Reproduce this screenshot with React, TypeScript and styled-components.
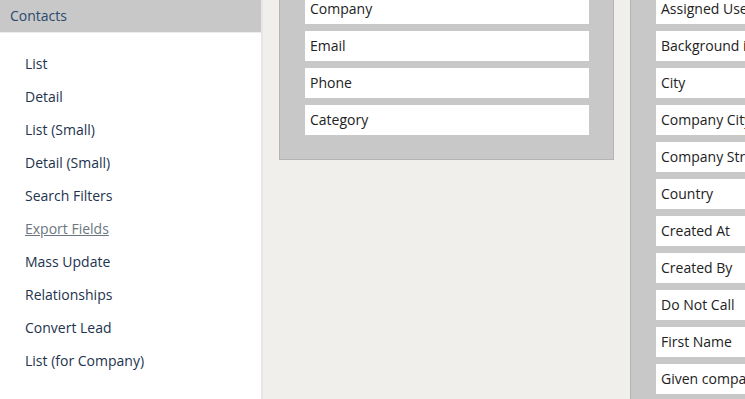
import React from 'react'
import styled, { createGlobalStyle } from 'styled-components'

const GlobalStyle = createGlobalStyle`
  html, body {
    margin: 0;
    padding: 0;
    overflow: hidden;
    background: #f0efeb;
    font-family: 'Open Sans', 'Noto Sans', sans-serif;
  }
`

const Page = styled.div`
  display: flex;
  width: 745px;
  height: 399px;
  overflow: hidden;
  background: #f0efeb;
`

const Sidebar = styled.aside`
  flex: 0 0 261px;
  background: #fff;
  border-right: 2px solid #e6e6e4;
`

const SidebarHeader = styled.div`
  height: 32px;
  line-height: 31px;
  padding-left: 10px;
  background: #c8c8c8;
  border-bottom: 1px solid #ececec;
  color: #2b4a6e;
  font-size: 14px;
`

const Menu = styled.ul`
  list-style: none;
  margin: 0;
  padding: 13px 0 0 25px;
`

const MenuItem = styled.li<{ $active?: boolean }>`
  height: 33px;
  line-height: 36px;
  font-size: 14px;
  color: ${p => (p.$active ? '#6c7680' : '#22334e')};
  text-decoration: ${p => (p.$active ? 'underline' : 'none')};
`

// the field lists are scrolled a little, so their tops sit above the window
const Main = styled.main`
  flex: 1;
  display: flex;
  align-items: flex-start;
  gap: 16px;
  padding-left: 16px;
  margin-top: -32px;
`

const Panel = styled.section<{ $width: number }>`
  flex: 0 0 ${p => p.$width}px;
  box-sizing: border-box;
  background: #c8c8c8;
  border: 1px solid #b4b4b4;
  padding: 25px 24px 24px 25px;
  display: flex;
  flex-direction: column;
  gap: 7px;
`

const Field = styled.div`
  height: 30px;
  line-height: 30px;
  padding-left: 5px;
  background: #fff;
  color: #222;
  font-size: 14px;
  white-space: nowrap;
  overflow: hidden;
`

const menu = [
  'List',
  'Detail',
  'List (Small)',
  'Detail (Small)',
  'Search Filters',
  'Export Fields',
  'Mass Update',
  'Relationships',
  'Convert Lead',
  'List (for Company)',
]

const selected = ['Company', 'Email', 'Phone', 'Category']

const available = [
  'Assigned User',
  'Background info',
  'City',
  'Company City',
  'Company Street',
  'Country',
  'Created At',
  'Created By',
  'Do Not Call',
  'First Name',
  'Given company name',
]

export default function App() {
  return (
    <>
      <GlobalStyle />
      <Page>
        <Sidebar>
          <SidebarHeader>Contacts</SidebarHeader>
          <Menu>
            {menu.map(m => (
              <MenuItem key={m} $active={m === 'Export Fields'}>
                {m}
              </MenuItem>
            ))}
          </Menu>
        </Sidebar>
        <Main>
          <Panel $width={335}>
            {selected.map(f => (
              <Field key={f}>{f}</Field>
            ))}
          </Panel>
          <Panel $width={335}>
            {available.map(f => (
              <Field key={f}>{f}</Field>
            ))}
          </Panel>
        </Main>
      </Page>
    </>
  )
}
